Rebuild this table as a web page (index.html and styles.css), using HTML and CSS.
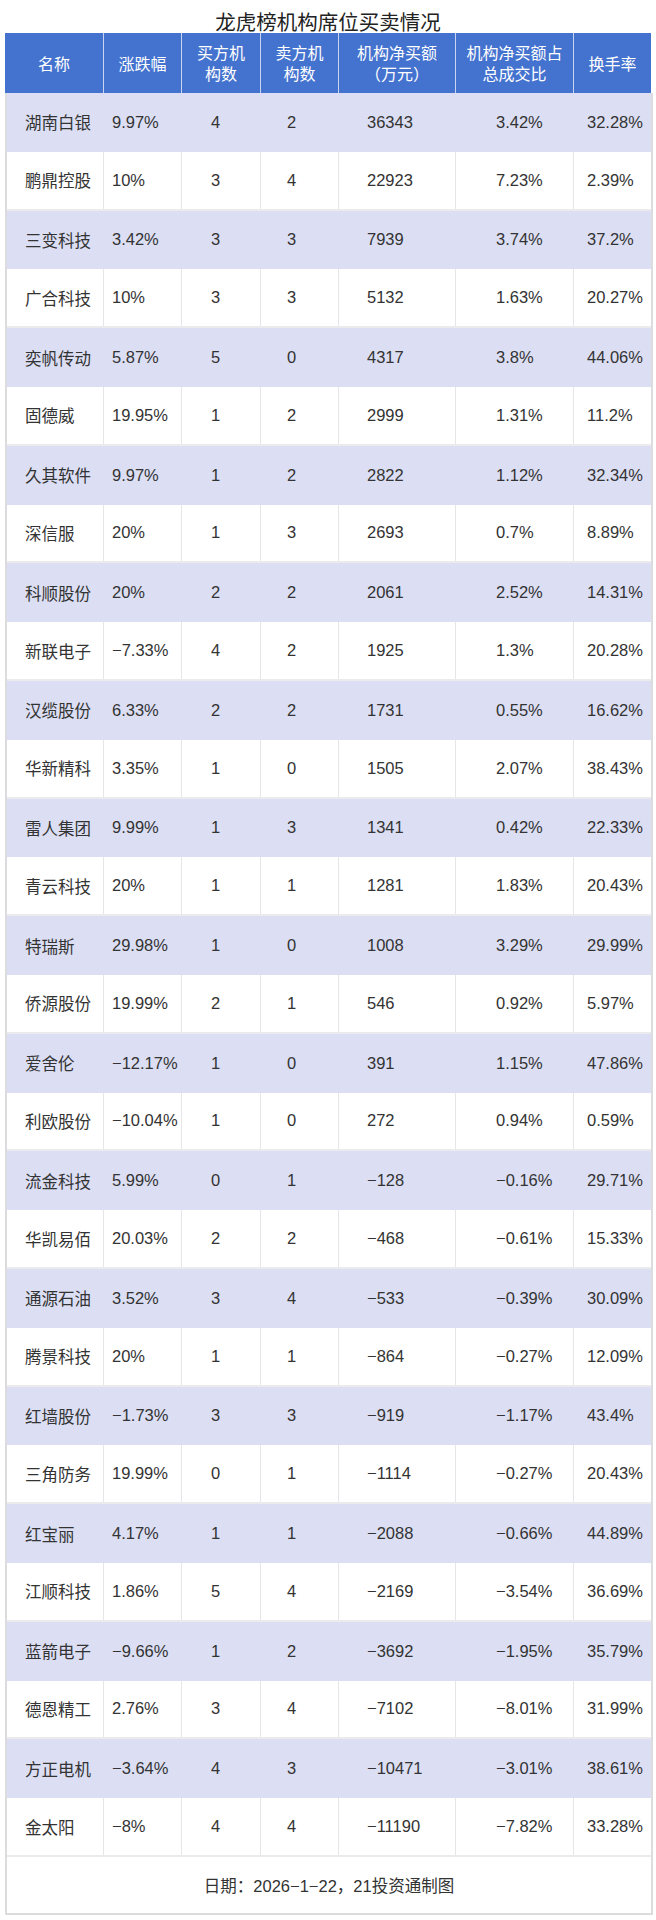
FILE: index.html
```html
<!DOCTYPE html>
<html lang="zh">
<head>
<meta charset="utf-8">
<title>龙虎榜机构席位买卖情况</title>
<link rel="stylesheet" href="styles.css">
</head>
<body>
<div class="title">龙虎榜机构席位买卖情况</div>
<div class="sheet">
  <div class="head">
    <div class="h">名称</div>
    <div class="h">涨跌幅</div>
    <div class="h">买方机<br>构数</div>
    <div class="h">卖方机<br>构数</div>
    <div class="h">机构净买额<br>（万元）</div>
    <div class="h">机构净买额占<br>总成交比</div>
    <div class="h">换手率</div>
  </div>
  <div class="body">
    <div class="row odd"><div class="c">湖南白银</div><div class="c">9.97%</div><div class="c">4</div><div class="c">2</div><div class="c">36343</div><div class="c">3.42%</div><div class="c">32.28%</div></div>
    <div class="row"><div class="c">鹏鼎控股</div><div class="c">10%</div><div class="c">3</div><div class="c">4</div><div class="c">22923</div><div class="c">7.23%</div><div class="c">2.39%</div></div>
    <div class="row odd"><div class="c">三变科技</div><div class="c">3.42%</div><div class="c">3</div><div class="c">3</div><div class="c">7939</div><div class="c">3.74%</div><div class="c">37.2%</div></div>
    <div class="row"><div class="c">广合科技</div><div class="c">10%</div><div class="c">3</div><div class="c">3</div><div class="c">5132</div><div class="c">1.63%</div><div class="c">20.27%</div></div>
    <div class="row odd"><div class="c">奕帆传动</div><div class="c">5.87%</div><div class="c">5</div><div class="c">0</div><div class="c">4317</div><div class="c">3.8%</div><div class="c">44.06%</div></div>
    <div class="row"><div class="c">固德威</div><div class="c">19.95%</div><div class="c">1</div><div class="c">2</div><div class="c">2999</div><div class="c">1.31%</div><div class="c">11.2%</div></div>
    <div class="row odd"><div class="c">久其软件</div><div class="c">9.97%</div><div class="c">1</div><div class="c">2</div><div class="c">2822</div><div class="c">1.12%</div><div class="c">32.34%</div></div>
    <div class="row"><div class="c">深信服</div><div class="c">20%</div><div class="c">1</div><div class="c">3</div><div class="c">2693</div><div class="c">0.7%</div><div class="c">8.89%</div></div>
    <div class="row odd"><div class="c">科顺股份</div><div class="c">20%</div><div class="c">2</div><div class="c">2</div><div class="c">2061</div><div class="c">2.52%</div><div class="c">14.31%</div></div>
    <div class="row"><div class="c">新联电子</div><div class="c">−7.33%</div><div class="c">4</div><div class="c">2</div><div class="c">1925</div><div class="c">1.3%</div><div class="c">20.28%</div></div>
    <div class="row odd"><div class="c">汉缆股份</div><div class="c">6.33%</div><div class="c">2</div><div class="c">2</div><div class="c">1731</div><div class="c">0.55%</div><div class="c">16.62%</div></div>
    <div class="row"><div class="c">华新精科</div><div class="c">3.35%</div><div class="c">1</div><div class="c">0</div><div class="c">1505</div><div class="c">2.07%</div><div class="c">38.43%</div></div>
    <div class="row odd"><div class="c">雷人集团</div><div class="c">9.99%</div><div class="c">1</div><div class="c">3</div><div class="c">1341</div><div class="c">0.42%</div><div class="c">22.33%</div></div>
    <div class="row"><div class="c">青云科技</div><div class="c">20%</div><div class="c">1</div><div class="c">1</div><div class="c">1281</div><div class="c">1.83%</div><div class="c">20.43%</div></div>
    <div class="row odd"><div class="c">特瑞斯</div><div class="c">29.98%</div><div class="c">1</div><div class="c">0</div><div class="c">1008</div><div class="c">3.29%</div><div class="c">29.99%</div></div>
    <div class="row"><div class="c">侨源股份</div><div class="c">19.99%</div><div class="c">2</div><div class="c">1</div><div class="c">546</div><div class="c">0.92%</div><div class="c">5.97%</div></div>
    <div class="row odd"><div class="c">爱舍伦</div><div class="c">−12.17%</div><div class="c">1</div><div class="c">0</div><div class="c">391</div><div class="c">1.15%</div><div class="c">47.86%</div></div>
    <div class="row"><div class="c">利欧股份</div><div class="c">−10.04%</div><div class="c">1</div><div class="c">0</div><div class="c">272</div><div class="c">0.94%</div><div class="c">0.59%</div></div>
    <div class="row odd"><div class="c">流金科技</div><div class="c">5.99%</div><div class="c">0</div><div class="c">1</div><div class="c">−128</div><div class="c">−0.16%</div><div class="c">29.71%</div></div>
    <div class="row"><div class="c">华凯易佰</div><div class="c">20.03%</div><div class="c">2</div><div class="c">2</div><div class="c">−468</div><div class="c">−0.61%</div><div class="c">15.33%</div></div>
    <div class="row odd"><div class="c">通源石油</div><div class="c">3.52%</div><div class="c">3</div><div class="c">4</div><div class="c">−533</div><div class="c">−0.39%</div><div class="c">30.09%</div></div>
    <div class="row"><div class="c">腾景科技</div><div class="c">20%</div><div class="c">1</div><div class="c">1</div><div class="c">−864</div><div class="c">−0.27%</div><div class="c">12.09%</div></div>
    <div class="row odd"><div class="c">红墙股份</div><div class="c">−1.73%</div><div class="c">3</div><div class="c">3</div><div class="c">−919</div><div class="c">−1.17%</div><div class="c">43.4%</div></div>
    <div class="row"><div class="c">三角防务</div><div class="c">19.99%</div><div class="c">0</div><div class="c">1</div><div class="c">−1114</div><div class="c">−0.27%</div><div class="c">20.43%</div></div>
    <div class="row odd"><div class="c">红宝丽</div><div class="c">4.17%</div><div class="c">1</div><div class="c">1</div><div class="c">−2088</div><div class="c">−0.66%</div><div class="c">44.89%</div></div>
    <div class="row"><div class="c">江顺科技</div><div class="c">1.86%</div><div class="c">5</div><div class="c">4</div><div class="c">−2169</div><div class="c">−3.54%</div><div class="c">36.69%</div></div>
    <div class="row odd"><div class="c">蓝箭电子</div><div class="c">−9.66%</div><div class="c">1</div><div class="c">2</div><div class="c">−3692</div><div class="c">−1.95%</div><div class="c">35.79%</div></div>
    <div class="row"><div class="c">德恩精工</div><div class="c">2.76%</div><div class="c">3</div><div class="c">4</div><div class="c">−7102</div><div class="c">−8.01%</div><div class="c">31.99%</div></div>
    <div class="row odd"><div class="c">方正电机</div><div class="c">−3.64%</div><div class="c">4</div><div class="c">3</div><div class="c">−10471</div><div class="c">−3.01%</div><div class="c">38.61%</div></div>
    <div class="row"><div class="c">金太阳</div><div class="c">−8%</div><div class="c">4</div><div class="c">4</div><div class="c">−11190</div><div class="c">−7.82%</div><div class="c">33.28%</div></div>
    <div class="foot">日期：2026−1−22，21投资通制图</div>
  </div>
</div>
</body>
</html>
```
FILE: styles.css
```css
html, body {
  margin: 0;
  padding: 0;
  background: #ffffff;
}
body {
  font-family: "Liberation Sans", "Noto Sans CJK SC", sans-serif;
  color: #333333;
  width: 656px;
}
.title {
  height: 33px;
  box-sizing: border-box;
  padding-top: 10px;
  line-height: 23px;
  font-size: 20.5px;
  color: #222222;
  text-align: center;
  font-family: "Noto Sans CJK SC", sans-serif;
}
.sheet {
  margin-left: 5px;
  width: 648px;
}
.head {
  display: grid;
  grid-template-columns: 98px 78px 79px 78px 117px 118px 78px;
  height: 60px;
  width: 646px;
  background: #4472cf;
}
.h {
  display: flex;
  align-items: center;
  justify-content: center;
  text-align: center;
  color: #ffffff;
  font-size: 16px;
  line-height: 21px;
  border-left: 1px solid #c9d5f0;
  font-family: "Noto Sans CJK SC", sans-serif;
}
.h:first-child {
  border-left: none;
}
.body {
  border-left: 2px solid #dcdcdf;
  border-right: 2px solid #dcdcdf;
  border-bottom: 2px solid #dcdcdf;
}
.row {
  display: grid;
  grid-template-columns: 96px 78px 79px 78px 117px 118px 78px;
  height: 58.8px;
  box-sizing: border-box;
  background: #ffffff;
  border-bottom: 2px solid #ebebee;
}
.row.odd {
  background: #dcdff3;
  border-bottom: none;
}
.c {
  display: flex;
  align-items: center;
  font-size: 16.5px;
  white-space: nowrap;
  border-left: 1px solid #e6e6e8;
}
.row.odd .c {
  border-left-color: #dcdff3;
}
.c:nth-child(1) { padding-left: 18px; border-left: none; }
.c:nth-child(2) { padding-left: 8px; }
.c:nth-child(3) { padding-left: 29px; }
.c:nth-child(4) { padding-left: 26px; }
.c:nth-child(5) { padding-left: 28px; }
.c:nth-child(6) { padding-left: 40px; }
.c:nth-child(7) { padding-left: 13px; }
.foot {
  height: 56px;
  display: flex;
  align-items: center;
  justify-content: center;
  font-size: 16.5px;
  color: #333333;
}
```
